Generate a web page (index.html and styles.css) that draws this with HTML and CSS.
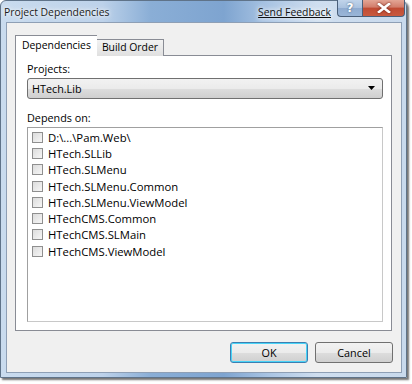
FILE: index.html
```html
<!DOCTYPE html>
<html>
<head>
<meta charset="utf-8">
<link rel="stylesheet" href="styles.css">
</head>
<body>
<div class="window">
  <div class="titlebar">
    <span class="title">Project Dependencies</span>
    <span class="spacer"></span>
    <a class="feedback">Send Feedback</a>
    <div class="caption">
      <div class="cbtn help">?</div>
      <div class="cbtn close">
        <svg width="14" height="10" viewBox="0 0 14 10"><path d="M2 1 L12 9 M12 1 L2 9" stroke="#fff" stroke-width="2.6" stroke-linecap="square"/></svg>
      </div>
    </div>
  </div>
  <div class="client">
    <div class="tabs">
      <div class="tab active">Dependencies</div>
      <div class="tab">Build Order</div>
    </div>
    <div class="panel">
      <div class="label">Projects:</div>
      <div class="combo">
        <span>HTech.Lib</span>
        <svg width="8" height="5" viewBox="0 0 8 5"><path d="M0 0 H7 L3.5 4 Z" fill="#000"/></svg>
      </div>
      <div class="label label2">Depends on:</div>
      <div class="list">
        <div class="item"><span class="cb"></span>D:\...\Pam.Web\</div>
        <div class="item"><span class="cb"></span>HTech.SLLib</div>
        <div class="item"><span class="cb"></span>HTech.SLMenu</div>
        <div class="item"><span class="cb"></span>HTech.SLMenu.Common</div>
        <div class="item"><span class="cb"></span>HTech.SLMenu.ViewModel</div>
        <div class="item"><span class="cb"></span>HTechCMS.Common</div>
        <div class="item"><span class="cb"></span>HTechCMS.SLMain</div>
        <div class="item"><span class="cb"></span>HTechCMS.ViewModel</div>
      </div>
    </div>
    <div class="buttons">
      <div class="btn default">OK</div>
      <div class="btn">Cancel</div>
    </div>
  </div>
</div>
</body>
</html>
```
FILE: styles.css
```css
html, body {
  margin: 0;
  padding: 0;
  background: #fff;
}
body {
  width: 412px;
  height: 384px;
  overflow: hidden;
  font-family: "Open Sans", "Noto Sans", sans-serif;
  font-size: 10.4px;
  color: #000;
}
.window {
  width: 407px;
  height: 378px;
  box-sizing: border-box;
  border: 1px solid #5f7389;
  border-radius: 6px 6px 0 0;
  background: linear-gradient(90deg, #c9dbee 0%, #bdd2ea 25%, #8aaed6 37%, #7ea4d0 55%, #a9c4e3 66%, #cfdeef 78%, #c8d9ec 100%);
  box-shadow: 2px 2px 2px rgba(0,0,0,0.55);
  display: flex;
  flex-direction: column;
  padding: 0 4px 4px 5px;
}
.titlebar {
  height: 21px;
  display: flex;
  align-items: flex-start;
  flex: none;
}
.title {
  margin: 4px 0 0 -2px;
  color: #1b1b1b;
  text-shadow: 0 0 6px #fff, 0 0 3px #fff;
}
.spacer { flex: 1; }
.feedback {
  margin: 4px 6px 0 0;
  text-decoration: underline;
  color: #111;
  text-shadow: 0 0 6px #fff, 0 0 4px #fff;
}
.caption {
  display: flex;
  margin-right: -3px;
  margin-top: -1px;
}
.cbtn {
  height: 17px;
  box-sizing: border-box;
  border: 1px solid #4a5f7a;
  border-top: none;
  display: flex;
  align-items: center;
  justify-content: center;
  color: #fff;
  font-weight: bold;
  font-size: 12px;
  font-family: "DejaVu Sans", sans-serif;
}
.help {
  width: 25px;
  border-radius: 0 0 0 4px;
  border-right: none;
  background: linear-gradient(#c1d4ea 0%, #a9c1de 50%, #8fabd0 51%, #9ab6d8 100%);
  text-shadow: 0 0 2px #35506e;
}
.close {
  width: 43px;
  border-radius: 0 0 4px 0;
  background: linear-gradient(#e3a595 0%, #d27d6b 45%, #c04a33 50%, #c95a3f 100%);
}
.close svg { filter: drop-shadow(0 0 1px #6a1c10); }
.client {
  flex: 1;
  background: #f0f0f0;
  border: 1px solid #8e9fb5;
  display: flex;
  flex-direction: column;
  padding: 13px 9px 0 8px;
}
.tabs {
  display: flex;
  align-items: flex-end;
  height: 20px;
  position: relative;
  z-index: 1;
  margin-bottom: -1px;
}
.tab {
  height: 17px;
  box-sizing: border-box;
  border: 1px solid #898c95;
  border-bottom: none;
  padding: 0 4px;
  line-height: 15px;
  background: linear-gradient(#f2f2f2, #e0e0e0);
}
.tab.active {
  height: 21px;
  background: #fff;
  padding: 2px 6px 0 6px;
  border-right: none;
  margin-right: -1px;
  z-index: 2;
  position: relative;
}
.tab + .tab { padding: 0 5px 0 5px; }
.panel {
  height: 276px;
  box-sizing: border-box;
  border: 1px solid #898c95;
  background: #fff;
  padding: 4px 8px 0 11px;
  display: flex;
  flex-direction: column;
  font-size: 10.8px;
}
.label { height: 17px; line-height: 17px; }
.label2 { margin-top: 10px; }
.combo {
  height: 21px;
  box-sizing: border-box;
  border: 1px solid #707070;
  border-radius: 3px;
  background: linear-gradient(#f2f2f2 0%, #ebebeb 50%, #dddddd 51%, #cfcfcf 100%);
  display: flex;
  align-items: center;
  justify-content: space-between;
  padding: 0 6px 0 4px;
  margin-top: 1px;
}
.list {
  margin-top: 1px;
  height: 195px;
  box-sizing: border-box;
  border: 1px solid #a0a0a0;
  border-right-color: #c8c8c8;
  border-bottom-color: #c8c8c8;
  padding: 1px 0 0 4px;
  font-size: 11.3px;
}
.item {
  height: 16.3px;
  display: flex;
  align-items: center;
  white-space: nowrap;
}
.cb {
  width: 11px;
  height: 11px;
  box-sizing: border-box;
  border: 1px solid #8f8f8f;
  background: linear-gradient(135deg, #dcdcdc, #f6f6f6);
  margin-right: 5px;
  flex: none;
}
.buttons {
  display: flex;
  justify-content: flex-end;
  gap: 7px;
  margin-top: 11px;
  margin-right: -1px;
  font-size: 10.8px;
}
.btn {
  width: 78px;
  height: 21px;
  box-sizing: border-box;
  border: 1px solid #707070;
  border-radius: 3px;
  background: linear-gradient(#f2f2f2 0%, #ebebeb 50%, #dddddd 51%, #cfcfcf 100%);
  display: flex;
  align-items: center;
  justify-content: center;
}
.btn.default {
  border-color: #3c7fb1;
  box-shadow: inset 0 0 0 1px #48d4f8;
}
```
